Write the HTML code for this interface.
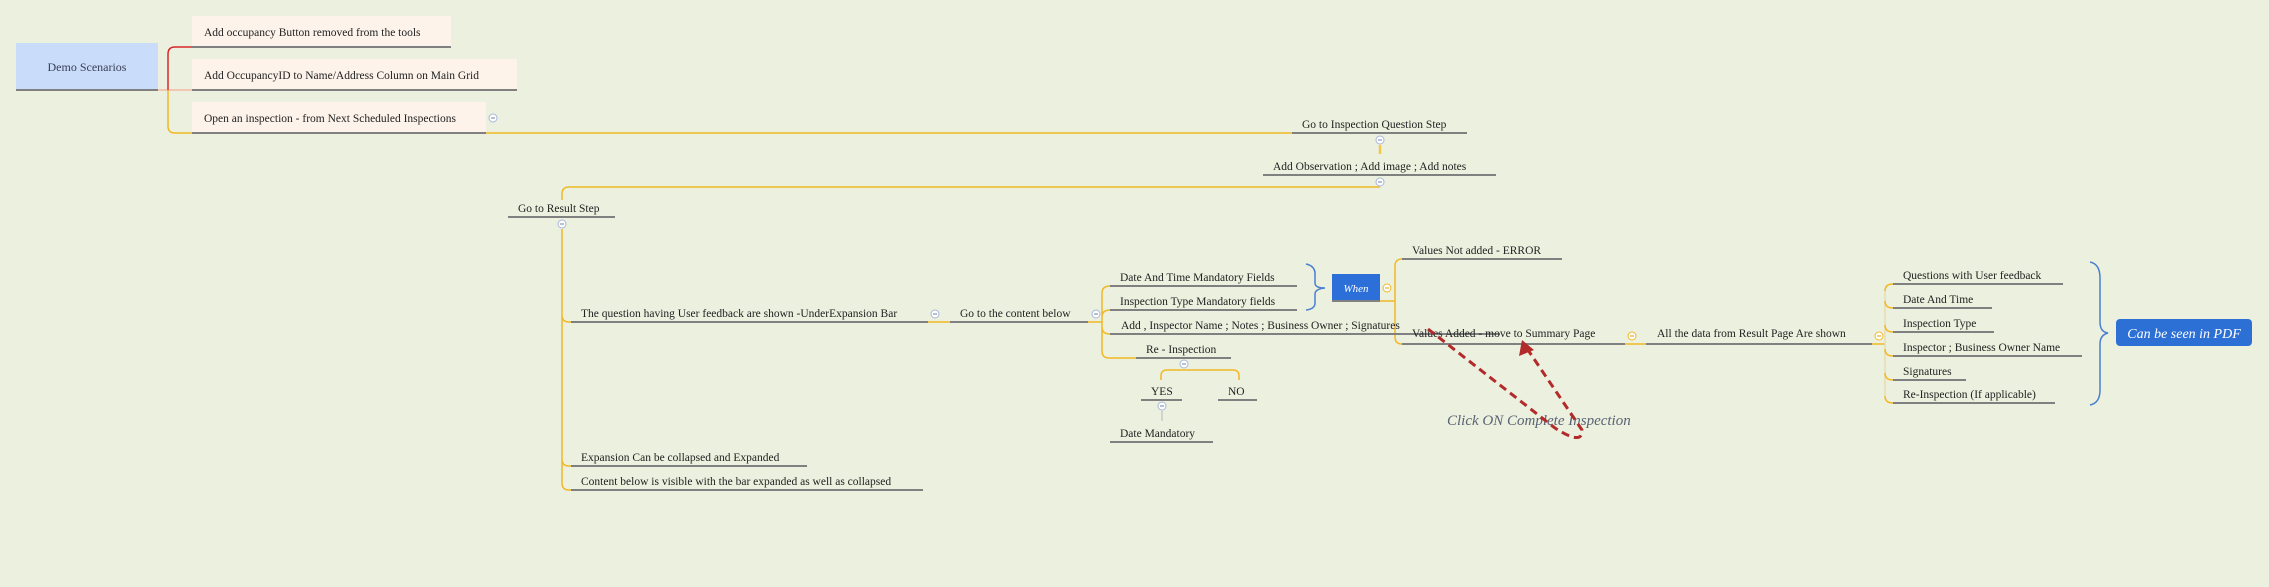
<!DOCTYPE html>
<html><head><meta charset="utf-8"><style>
html,body{margin:0;padding:0;background:#ecf0df;}
svg{display:block;}
text{font-family:"Liberation Serif",serif;font-size:11.5px;fill:#222;}
</style></head><body>
<svg width="2269" height="587" viewBox="0 0 2269 587" xmlns="http://www.w3.org/2000/svg">
<rect width="2269" height="587" fill="#ecf0df"/>
<g fill="none" stroke-width="1.5">
<path d="M158,90 H192" stroke="#f4b8a0"/>
<path d="M192,47 H175 Q168,47 168,54 V90" stroke="#d8282a"/>
<path d="M168,90 V126 Q168,133 175,133 H192" stroke="#f2b824"/>
<path d="M486,133 H1292" stroke="#f2b824"/>
<path d="M1380,145 V154" stroke="#f2c84a" stroke-width="2.5"/>
<path d="M1380,187 H569 Q562,187 562,194 V200" stroke="#f2b824"/>
<path d="M562,229 V483 Q562,490 569,490 H571 M562,315 Q562,322 569,322 H571 M562,459 Q562,466 569,466 H571" stroke="#f2b824"/>
<path d="M928,322 H950" stroke="#f2b824"/>
<path d="M1088,322 H1102 M1110,286 Q1102,286 1102,293 V351 Q1102,358 1109,358 H1136 M1102,317 Q1102,310 1110,310 M1102,327 Q1102,334 1110,334" stroke="#f2b824"/>
<path d="M1161,380 V376 Q1161,370 1167,370 H1233 Q1239,370 1239,376 V380" stroke="#f2b824"/>
<path d="M1162,411 V421" stroke="#b8b8b8" stroke-width="1"/>
<path d="M1380,301 H1395 M1402,259 Q1395,259 1395,266 V337 Q1395,344 1402,344" stroke="#f2b824"/>
<path d="M1625,344 H1646 M1872,344 H1885" stroke="#f2b824"/>
<path d="M1885,291 V396" stroke="#e8dcb0"/>
<path d="M1893,284 Q1885,284 1885,291 M1885,396 Q1885,403 1893,403 M1885,301 Q1885,308 1893,308 M1885,325 Q1885,332 1893,332 M1885,349 Q1885,356 1893,356 M1885,373 Q1885,380 1893,380" stroke="#f2b824"/>
<path d="M1306,264 Q1316,266 1315,276 V283 Q1315,288 1325,288 Q1315,289 1315,294 V303 Q1315,309 1306,310" stroke="#4a80d0"/>
<path d="M2090,262 Q2100,264 2100,278 V322 Q2100,332 2108,333 Q2100,335 2100,344 V390 Q2100,403 2090,405" stroke="#4a80d0"/>
</g>
<rect x="16" y="43" width="142" height="47" fill="#c9dcfa"/>
<rect x="192" y="16" width="259" height="31" fill="#fdf3ea"/>
<rect x="192" y="59" width="325" height="31" fill="#fdf3ea"/>
<rect x="192" y="102" width="294" height="31" fill="#fdf3ea"/>
<rect x="1332" y="274" width="48" height="27" fill="#2d6fd8"/>
<rect x="2116" y="319" width="136" height="27" rx="4" fill="#2c6fd5"/>
<g stroke="#808080" stroke-width="2">
<path d="M16,90 H158 M192,47 H451 M192,90 H517 M192,133 H486"/>
<path d="M1292,133 H1467 M1263,175 H1496 M508,217 H615"/>
<path d="M571,322 H928 M950,322 H1088 M571,466 H807 M571,490 H923"/>
<path d="M1110,286 H1297 M1110,310 H1297 M1110,334 H1500 M1136,358 H1231"/>
<path d="M1141,400 H1182 M1218,400 H1257 M1110,442 H1213 M1332,301 H1380"/>
<path d="M1402,259 H1562 M1402,344 H1625 M1646,344 H1872"/>
<path d="M1893,284 H2063 M1893,308 H1992 M1893,332 H1994 M1893,356 H2082 M1893,380 H1966 M1893,403 H2055"/>
</g>
<g stroke-width="1">
<g fill="#fff" stroke="#a8b6dc">
<circle cx="493" cy="118" r="4"/><circle cx="1380" cy="140" r="4"/><circle cx="1380" cy="182" r="4"/>
<circle cx="562" cy="224" r="4"/><circle cx="935" cy="314" r="4"/><circle cx="1096" cy="314" r="4"/>
<circle cx="1184" cy="364" r="4"/><circle cx="1162" cy="406" r="4"/>
</g>
<g fill="#fff" stroke="#f2b824">
<circle cx="1387" cy="288" r="4"/><circle cx="1632" cy="336" r="4"/><circle cx="1879" cy="336" r="4"/>
</g>
<path stroke="#7080b0" d="M491,118 H495 M1378,140 H1382 M1378,182 H1382 M560,224 H564 M933,314 H937 M1094,314 H1098 M1182,364 H1186 M1160,406 H1164"/>
<path stroke="#e0a010" d="M1385,288 H1389 M1630,336 H1634 M1877,336 H1881"/>
</g>
<text x="87" y="71" text-anchor="middle" style="fill:#3a3f55;font-size:12px">Demo Scenarios</text>
<text x="204" y="36">Add occupancy Button removed from the tools</text>
<text x="204" y="79">Add OccupancyID to Name/Address Column on Main Grid</text>
<text x="204" y="122">Open an inspection - from Next Scheduled Inspections</text>
<text x="1302" y="128">Go to Inspection Question Step</text>
<text x="1273" y="170">Add Observation ; Add image ; Add notes</text>
<text x="518" y="212">Go to Result Step</text>
<text x="581" y="317">The question having User feedback are shown -UnderExpansion Bar</text>
<text x="960" y="317">Go to the content below</text>
<text x="1120" y="281">Date And Time Mandatory Fields</text>
<text x="1120" y="305">Inspection Type Mandatory fields</text>
<text x="1121" y="329">Add , Inspector Name ; Notes ; Business Owner ; Signatures</text>
<text x="1146" y="353">Re - Inspection</text>
<text x="1151" y="395">YES</text>
<text x="1228" y="395">NO</text>
<text x="1120" y="437">Date Mandatory</text>
<text x="581" y="461">Expansion Can be collapsed and Expanded</text>
<text x="581" y="485">Content below is visible with the bar expanded as well as collapsed</text>
<text x="1356" y="292" text-anchor="middle" style="fill:#fff;font-style:italic;font-size:11px">When</text>
<text x="1412" y="254">Values Not added - ERROR</text>
<text x="1412" y="337">Values Added - move to Summary Page</text>
<text x="1657" y="337">All the data from Result Page Are shown</text>
<text x="1903" y="279">Questions with User feedback</text>
<text x="1903" y="303">Date And Time</text>
<text x="1903" y="327">Inspection Type</text>
<text x="1903" y="351">Inspector ; Business Owner Name</text>
<text x="1903" y="375">Signatures</text>
<text x="1903" y="398">Re-Inspection (If applicable)</text>
<text x="2184" y="338" text-anchor="middle" style="fill:#fff;font-style:italic;font-size:14px">Can be seen in PDF</text>
<text x="1447" y="425" style="fill:#5a6374;font-style:italic;font-size:15px">Click ON Complete Inspection</text>
<path d="M1428,329 L1555,428 Q1583,446 1582,430 L1528,350" fill="none" stroke="#b22a2a" stroke-width="3" stroke-dasharray="8,5"/>
<polygon points="1522,340 1519,356 1534,350" fill="#b22a2a"/>
</svg>
</body></html>
